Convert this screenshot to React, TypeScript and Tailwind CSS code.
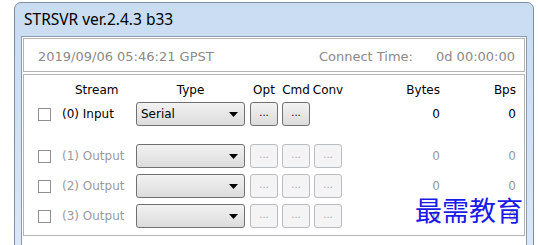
const font = { fontFamily: '"DejaVu Sans", Verdana, sans-serif' }

const Check = () => (
  <div className="w-[13px] h-[13px] border border-[#8e8f8f] bg-white shrink-0" />
)

const Select = ({ value, disabled }: { value?: string; disabled?: boolean }) => (
  <div
    className={`w-[109px] h-[24px] flex items-center justify-between pl-[4px] pr-[6px] rounded-[3px] border border-[#707070] bg-gradient-to-b from-[#f2f2f2] to-[#dcdcdc] text-[12px] ${
      disabled ? "text-[#999]" : "text-black"
    }`}
  >
    <span>{value}</span>
    <svg width="9" height="5" viewBox="0 0 9 5">
      <path d="M0 0h9L4.5 5z" fill="#000" />
    </svg>
  </div>
)

const Btn = ({ disabled }: { disabled?: boolean }) => (
  <div
    className={`w-[28px] h-[24px] flex items-center justify-center rounded-[3px] border text-[10px] leading-none pb-[2px] ${
      disabled
        ? "border-[#b8bcbf] bg-[#f4f4f4] text-[#a8a8a8]"
        : "border-[#707070] bg-gradient-to-b from-[#f2f2f2] to-[#dcdcdc] text-black"
    }`}
  >
    ...
  </div>
)

const Row = ({ label, value, input }: { label: string; value?: string; input?: boolean }) => (
  <div className="flex items-center h-[24px] pl-[14px]">
    <Check />
    <div className={`ml-[11px] w-[74px] text-[12px] ${input ? "text-black" : "text-[#9a9a9a]"}`}>{label}</div>
    <Select value={value} disabled={!input} />
    <div className="ml-[5px]">
      <Btn disabled={!input} />
    </div>
    <div className="ml-[4px]">
      <Btn disabled={!input} />
    </div>
    <div className="ml-[4px] w-[28px]">{!input && <Btn disabled />}</div>
    <div className={`w-[98px] text-right text-[12px] ${input ? "text-black" : "text-[#9a9a9a]"}`}>0</div>
    <div className={`w-[76px] text-right text-[12px] ${input ? "text-black" : "text-[#9a9a9a]"}`}>0</div>
  </div>
)

const Head = ({ w, children, ml }: { w: string; children: string; ml?: string }) => (
  <div className={`${w} ${ml ?? ""} flex justify-center whitespace-nowrap`}>{children}</div>
)

export default function App() {
  return (
    <div className="w-[538px] h-[245px] bg-white overflow-hidden relative" style={font}>
      <div className="ml-[14px] mt-[2px] w-[520px] h-[260px] rounded-t-[7px] border border-[#7d8fa5] bg-gradient-to-b from-[#c9dcf2] to-[#dbe8f7] px-[6px]">
        <div
          className="h-[33px] flex items-center pl-[3px] text-[15.5px] text-black"
          style={{ fontFamily: '"Noto Sans", sans-serif' }}
        >
          STRSVR ver.2.4.3 b33
        </div>
        <div className="bg-white border border-[#8c9bb0] h-[230px] px-[1px] pt-[1px]">
          <div className="h-[34px] border border-[#b5b5b5] shadow-[inset_1px_1px_0_#fff] flex items-center pt-[4px] pl-[14px] text-[13px] text-[#8a8a8a]">
            <span>2019/09/06 05:46:21 GPST</span>
            <span className="ml-auto">Connect Time:</span>
            <span className="w-[111px] text-right pr-[9px]">0d 00:00:00</span>
          </div>
          <div className="mt-[2px] border border-[#b5b5b5] pt-[7px] pb-[7px]">
            <div className="flex items-center h-[16px] pl-[14px] text-[12px] text-black">
              <div className="w-[98px] pl-[37px]">Stream</div>
              <Head w="w-[109px]">Type</Head>
              <Head w="w-[28px]" ml="ml-[5px]">Opt</Head>
              <Head w="w-[28px]" ml="ml-[4px]">Cmd</Head>
              <Head w="w-[28px]" ml="ml-[4px]">Conv</Head>
              <div className="w-[98px] text-right">Bytes</div>
              <div className="w-[76px] text-right">Bps</div>
            </div>
            <div className="mt-[4px]">
              <Row label="(0) Input" value="Serial" input />
            </div>
            <div className="mt-[18px]">
              <Row label="(1) Output" />
            </div>
            <div className="mt-[6px]">
              <Row label="(2) Output" />
            </div>
            <div className="mt-[6px]">
              <Row label="(3) Output" />
            </div>
          </div>
        </div>
      </div>
      <div
        className="absolute left-[415px] top-[196px] text-[27px] leading-none text-[#1a1ae8]"
        style={{ fontFamily: '"Noto Sans CJK SC", sans-serif' }}
      >
        最需教育
      </div>
    </div>
  )
}
